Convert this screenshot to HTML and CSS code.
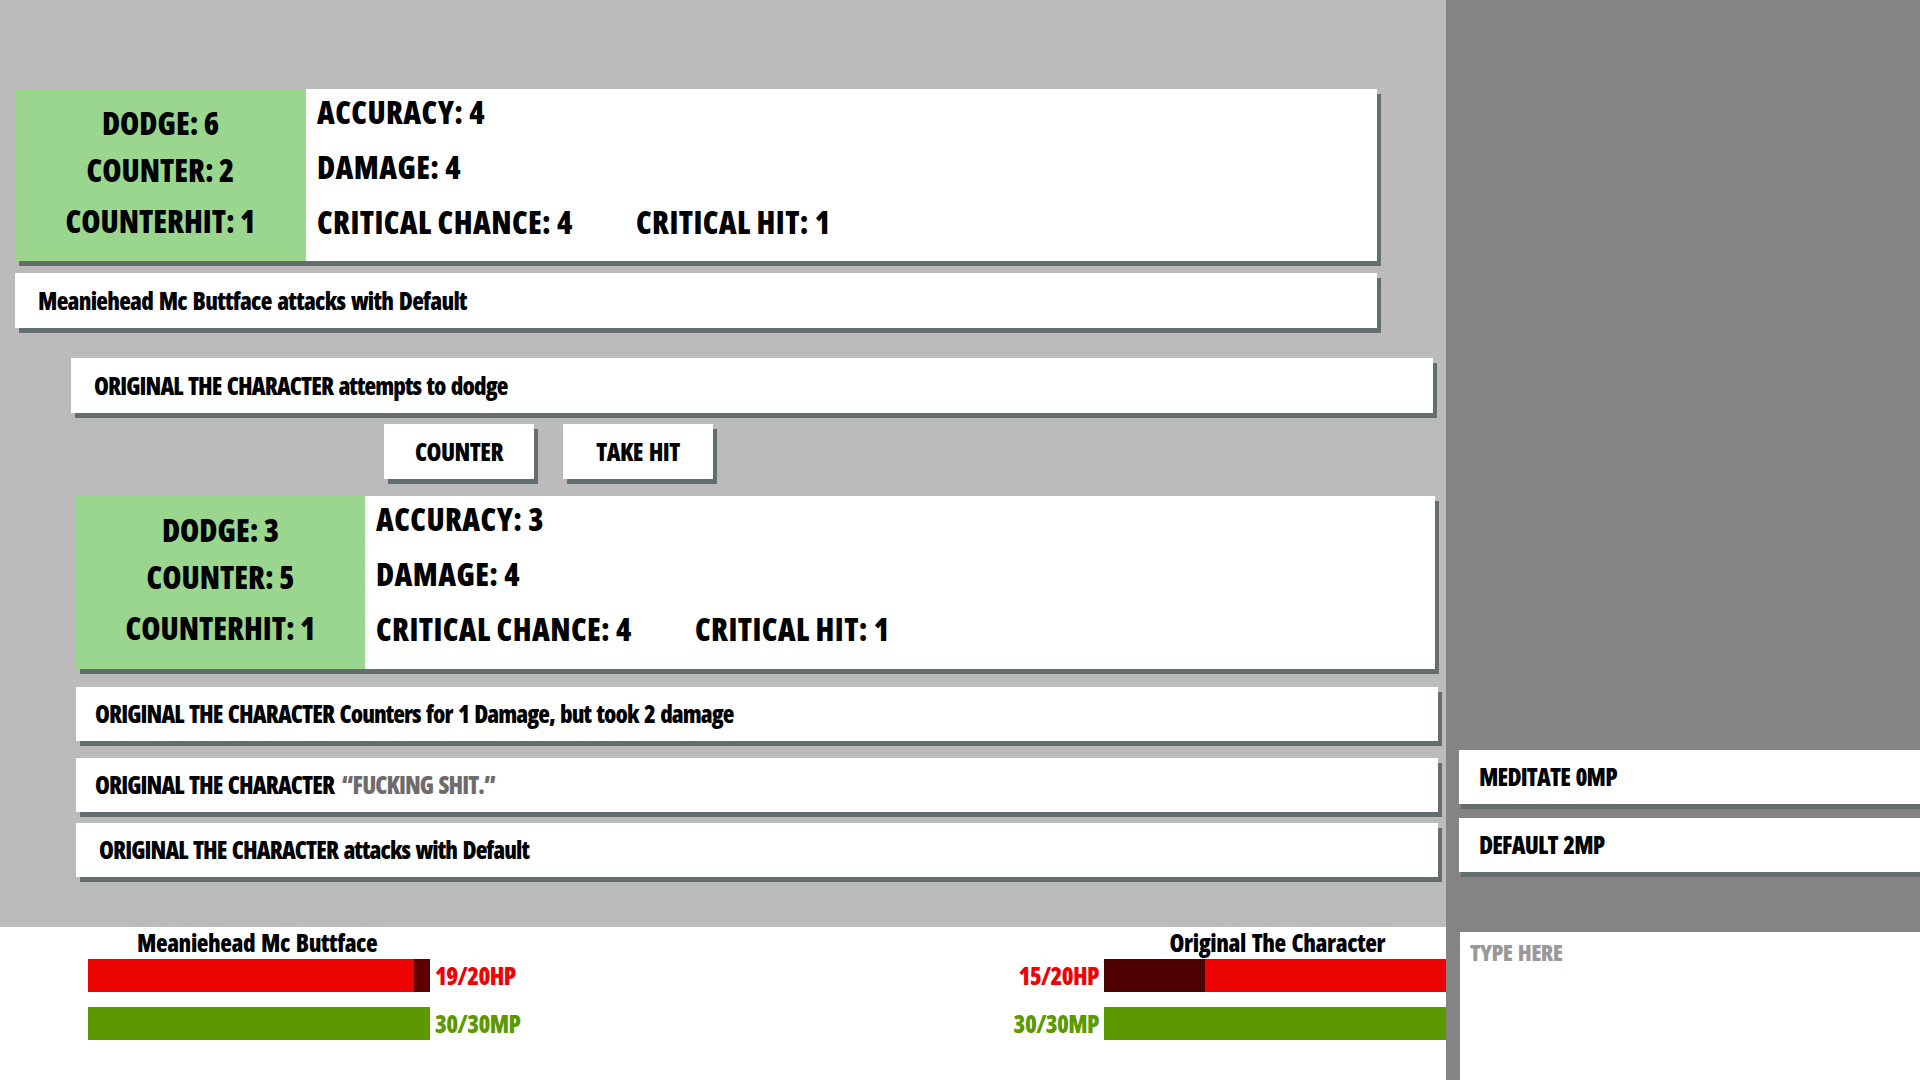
FILE: index.html
```html
<!DOCTYPE html>
<html>
<head>
<meta charset="utf-8">
<link rel="stylesheet" href="styles.css">
</head>
<body>
<div class="main">
  <div class="log">
    <div class="card card-a">
      <div class="defense">
        <div class="drow">DODGE: 6</div>
        <div class="drow">COUNTER: 2</div>
        <div class="drow last">COUNTERHIT: 1</div>
      </div>
      <div class="offense">
        <div class="orow">ACCURACY: 4</div>
        <div class="orow">DAMAGE: 4</div>
        <div class="orow"><span class="crit">CRITICAL CHANCE: 4</span><span>CRITICAL HIT: 1</span></div>
      </div>
    </div>
    <div class="entry entry-a">Meaniehead Mc Buttface attacks with Default</div>
    <div class="entry entry-b">ORIGINAL THE CHARACTER attempts to dodge</div>
    <div class="choices">
      <div class="btn">COUNTER</div>
      <div class="btn">TAKE HIT</div>
    </div>
    <div class="card card-b">
      <div class="defense">
        <div class="drow">DODGE: 3</div>
        <div class="drow">COUNTER: 5</div>
        <div class="drow last">COUNTERHIT: 1</div>
      </div>
      <div class="offense">
        <div class="orow">ACCURACY: 3</div>
        <div class="orow">DAMAGE: 4</div>
        <div class="orow"><span class="crit">CRITICAL CHANCE: 4</span><span>CRITICAL HIT: 1</span></div>
      </div>
    </div>
    <div class="entry entry-c">ORIGINAL THE CHARACTER Counters for 1 Damage, but took 2 damage</div>
    <div class="entry entry-d">ORIGINAL THE CHARACTER <span class="quote">“FUCKING SHIT.”</span></div>
    <div class="entry entry-e">ORIGINAL THE CHARACTER attacks with Default</div>
  </div>
  <div class="status">
    <div class="fighter enemy">
      <div class="fname">Meaniehead Mc Buttface</div>
      <div class="barrow">
        <div class="bar hp"><div class="fill" style="width:326px"></div><div class="lost"></div></div>
        <div class="val hpv">19/20HP</div>
      </div>
      <div class="barrow mprow">
        <div class="bar mp"></div>
        <div class="val mpv">30/30MP</div>
      </div>
    </div>
    <div class="fighter player">
      <div class="fname">Original The Character</div>
      <div class="barrow">
        <div class="val hpv">15/20HP</div>
        <div class="bar hp"><div class="lost" style="width:101px"></div><div class="fill grow"></div></div>
      </div>
      <div class="barrow mprow">
        <div class="val mpv">30/30MP</div>
        <div class="bar mp"></div>
      </div>
    </div>
  </div>
</div>
<div class="side">
  <div class="skill skill-a">MEDITATE 0MP</div>
  <div class="skill skill-b">DEFAULT 2MP</div>
  <div class="chat">TYPE HERE</div>
</div>
</body>
</html>
```

FILE: styles.css
```css
* { box-sizing: border-box; }
html, body { margin: 0; padding: 0; }
body {
  width: 1920px;
  height: 1080px;
  overflow: hidden;
  display: flex;
  font-family: "Open Sans", "Roboto", sans-serif;
  font-stretch: 75%;
  font-weight: 800;
  color: #000;
}
.main {
  width: 1446px;
  display: flex;
  flex-direction: column;
  background: #bbbbbb;
}
.log {
  height: 927px;
  padding-top: 89px;
  display: flex;
  flex-direction: column;
}
.card {
  display: flex;
  background: #fff;
  box-shadow: 4px 5px 0 #646e6e;
  height: 172px;
}
.card-a { margin-left: 15px; width: 1362px; }
.card-b { margin-left: 76px; width: 1359px; margin-top: 0; height: 173px; }
.defense {
  width: 291px;
  background: #9bd68e;
  padding-top: 11px;
  display: flex;
  flex-direction: column;
  align-items: center;
  font-size: 31px;
}
.card-b .defense { width: 289px; }
.drow { height: 47px; line-height: 47px; }
.drow.last { margin-top: 4px; }
.offense {
  padding-top: 1px;
  padding-left: 11px;
  display: flex;
  flex-direction: column;
  gap: 10px;
  font-size: 31px;
  letter-spacing: 0.4px;
}
.orow { height: 45px; line-height: 45px; white-space: nowrap; }
.crit { display: inline-block; width: 319px; }
.entry {
  background: #fff;
  box-shadow: 4px 5px 0 #646e6e;
  height: 55px;
  line-height: 55px;
  font-size: 24px;
  letter-spacing: -0.9px;
  word-spacing: 2px;
  padding-left: 23px;
  width: 1362px;
  white-space: nowrap;
}
.entry-a { margin-left: 15px; margin-top: 12px; letter-spacing: -0.7px; }
.entry-b { margin-left: 71px; margin-top: 30px; }
.entry-c { margin-left: 76px; margin-top: 18px; height: 54px; line-height: 54px; padding-left: 19px; }
.entry-d { margin-left: 76px; margin-top: 17px; height: 54px; line-height: 54px; padding-left: 19px; }
.entry-e { margin-left: 76px; margin-top: 11px; height: 54px; line-height: 54px; padding-left: 23px; }
.quote { color: #706b6b; margin-left: 2px; }
.choices {
  display: flex;
  gap: 29px;
  margin-left: 384px;
  margin-top: 11px;
  margin-bottom: 17px;
}
.btn {
  width: 150px;
  height: 55px;
  line-height: 55px;
  text-align: center;
  background: #fff;
  box-shadow: 4px 5px 0 #646e6e;
  font-size: 24px;
  letter-spacing: -0.5px;
  word-spacing: 2px;
}
.status {
  flex: 1;
  background: #fff;
  display: flex;
  justify-content: space-between;
}
.fighter { display: flex; flex-direction: column; }
.enemy { margin-left: 88px; align-items: flex-start; }
.player { align-items: flex-end; }
.fname {
  height: 32px;
  line-height: 31px;
  font-size: 24px;
  letter-spacing: -0.4px;
  word-spacing: 2px;
}
.enemy .fname { padding-left: 49px; }
.player .fname { padding-right: 61px; }
.barrow { display: flex; align-items: center; gap: 5px; height: 33px; }
.mprow { margin-top: 15px; }
.bar { width: 342px; height: 33px; display: flex; }
.hp .fill { background: #ec0303; height: 100%; }
.hp .lost { background: #5e0000; height: 100%; flex: 1; }
.player .hp .lost { flex: none; background: #4c0000; }
.hp .fill.grow { flex: 1; }
.mp { background: #5c9900; }
.val { font-size: 24px; line-height: 33px; letter-spacing: -0.6px; }
.hpv { color: #ec0303; }
.mpv { color: #5c9900; }
.side {
  flex: 1;
  background: #848484;
  display: flex;
  flex-direction: column;
  padding-top: 750px;
}
.skill {
  margin-left: 13px;
  height: 54px;
  line-height: 54px;
  background: #fff;
  box-shadow: 2px 5px 0 #646e6e;
  padding-left: 20px;
  font-size: 24px;
  letter-spacing: -0.8px;
  word-spacing: 2px;
}
.skill-b { margin-top: 14px; }
.chat {
  margin-left: 14px;
  margin-top: 60px;
  flex: 1;
  background: #fff;
  color: #999999;
  font-size: 23px;
  letter-spacing: -0.6px;
  word-spacing: 2px;
  padding-left: 10px;
  padding-top: 4px;
}
```
